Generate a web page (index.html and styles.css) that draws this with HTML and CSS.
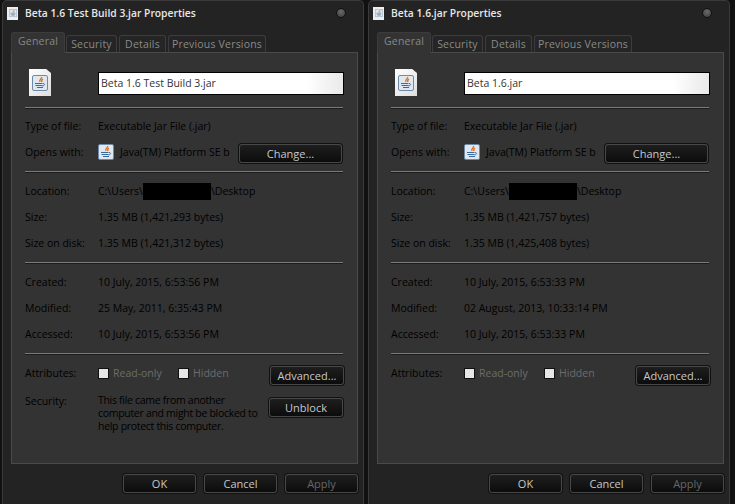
FILE: index.html
```html
<!DOCTYPE html>
<html lang="en">
<head>
<meta charset="utf-8">
<title>Properties</title>
<link rel="stylesheet" href="styles.css">
</head>
<body>
<svg class="defs" width="0" height="0" aria-hidden="true">
  <symbol id="java" viewBox="0 0 16 16">
    <rect x="0.5" y="0.5" width="15" height="15" rx="1.5" fill="#dfe8f1" stroke="#6f8aa6"/>
    <path d="M9.500 2c1 1.800-3 2.500-1.500 5M11 4c-1.300.8-1.800 1.500-1 3" fill="none" stroke="#e2741c" stroke-width="1.400"/>
    <path d="M3 8.500h7.500M3.500 10.500h7M5 12.500h6" stroke="#3a6a9c" stroke-width="1"/>
    <path d="M11 8.500c2.200 0 2 2-.5 2.500" fill="none" stroke="#3a6a9c"/>
  </symbol>
</svg>
<main class="desktop">
  <section class="window">
    <header class="titlebar">
      <span class="title-doc"><svg class="title-icon"><use href="#java"/></svg></span>
      <h1 class="title">Beta 1.6 Test Build 3.jar Properties</h1>
      <span class="close"></span>
    </header>
    <nav class="tabs">
      <span class="tab tab-active">General</span>
      <span class="tab tab-security">Security</span>
      <span class="tab tab-details">Details</span>
      <span class="tab tab-versions">Previous Versions</span>
    </nav>
    <div class="panel">
      <div class="name-row">
        <span class="doc"><svg class="doc-icon"><use href="#java"/></svg></span>
        <div class="name-input">Beta 1.6 Test Build 3.jar</div>
      </div>
      <hr class="sep sep-name">
      <div class="row row-first"><span class="label">Type of file:</span><span class="value">Executable Jar File (.jar)</span></div>
      <div class="row">
        <span class="label">Opens with:</span>
        <span class="value opens"><svg class="app-icon"><use href="#java"/></svg>Java(TM) Platform SE b</span>
        <button class="btn btn-change">Change...</button>
      </div>
      <hr class="sep">
      <div class="row"><span class="label">Location:</span><span class="value value-path">C:\Users\<span class="redact"></span>\Desktop</span></div>
      <div class="row"><span class="label">Size:</span><span class="value">1.35 MB (1,421,293 bytes)</span></div>
      <div class="row"><span class="label">Size on disk:</span><span class="value">1.35 MB (1,421,312 bytes)</span></div>
      <hr class="sep">
      <div class="row"><span class="label">Created:</span><span class="value">10 July, 2015, 6:53:56 PM</span></div>
      <div class="row"><span class="label">Modified:</span><span class="value">25 May, 2011, 6:35:43 PM</span></div>
      <div class="row"><span class="label">Accessed:</span><span class="value">10 July, 2015, 6:53:56 PM</span></div>
      <hr class="sep">
      <div class="row row-attr">
        <span class="label">Attributes:</span>
        <span class="check"><i class="box"></i>Read-only</span>
        <span class="check"><i class="box"></i>Hidden</span>
        <button class="btn btn-side">Advanced...</button>
      </div>
      <div class="row-sec">
        <span class="label">Security:</span>
        <p class="sec-text">This file came from another<br>computer and might be blocked to<br>help protect this computer.</p>
        <button class="btn btn-side">Unblock</button>
      </div>
    </div>
    <footer class="actions">
      <button class="btn btn-action">OK</button>
      <button class="btn btn-action">Cancel</button>
      <button class="btn btn-action btn-disabled">Apply</button>
    </footer>
  </section>

  <section class="window">
    <header class="titlebar">
      <span class="title-doc"><svg class="title-icon"><use href="#java"/></svg></span>
      <h1 class="title">Beta 1.6.jar Properties</h1>
      <span class="close"></span>
    </header>
    <nav class="tabs">
      <span class="tab tab-active">General</span>
      <span class="tab tab-security">Security</span>
      <span class="tab tab-details">Details</span>
      <span class="tab tab-versions">Previous Versions</span>
    </nav>
    <div class="panel">
      <div class="name-row">
        <span class="doc"><svg class="doc-icon"><use href="#java"/></svg></span>
        <div class="name-input">Beta 1.6.jar</div>
      </div>
      <hr class="sep sep-name">
      <div class="row row-first"><span class="label">Type of file:</span><span class="value">Executable Jar File (.jar)</span></div>
      <div class="row">
        <span class="label">Opens with:</span>
        <span class="value opens"><svg class="app-icon"><use href="#java"/></svg>Java(TM) Platform SE b</span>
        <button class="btn btn-change">Change...</button>
      </div>
      <hr class="sep">
      <div class="row"><span class="label">Location:</span><span class="value value-path">C:\Users\<span class="redact"></span>\Desktop</span></div>
      <div class="row"><span class="label">Size:</span><span class="value">1.35 MB (1,421,757 bytes)</span></div>
      <div class="row"><span class="label">Size on disk:</span><span class="value">1.35 MB (1,425,408 bytes)</span></div>
      <hr class="sep">
      <div class="row"><span class="label">Created:</span><span class="value">10 July, 2015, 6:53:33 PM</span></div>
      <div class="row"><span class="label">Modified:</span><span class="value">02 August, 2013, 10:33:14 PM</span></div>
      <div class="row"><span class="label">Accessed:</span><span class="value">10 July, 2015, 6:53:33 PM</span></div>
      <hr class="sep">
      <div class="row row-attr">
        <span class="label">Attributes:</span>
        <span class="check"><i class="box"></i>Read-only</span>
        <span class="check"><i class="box"></i>Hidden</span>
        <button class="btn btn-side">Advanced...</button>
      </div>
    </div>
    <footer class="actions">
      <button class="btn btn-action">OK</button>
      <button class="btn btn-action">Cancel</button>
      <button class="btn btn-action btn-disabled">Apply</button>
    </footer>
  </section>
</main>
</body>
</html>
```
FILE: styles.css
```css
* { box-sizing: border-box; }
html, body { margin: 0; height: 100%; }
body {
  width: 735px;
  height: 504px;
  overflow: hidden;
  background: #111;
  font-family: "Open Sans", "Liberation Sans", sans-serif;
  font-size: 10.5px;
  color: #000;
}
.defs { position: absolute; }
.desktop {
  display: flex;
  gap: 4px;
  padding-left: 2px;
  height: 504px;
}
.window {
  width: 362px;
  height: 504px;
  background: #232323;
  border: 1px solid #3a3a3a;
  border-bottom: 0;
  border-radius: 5px 5px 0 0;
  padding: 0 6px 0 8px;
  display: flex;
  flex-direction: column;
}
.titlebar {
  height: 24px;
  margin-left: -4px;
  display: flex;
  align-items: center;
}
.title-doc {
  width: 11px;
  height: 13px;
  background: #eee;
  display: flex;
  align-items: center;
  justify-content: center;
}
.title-icon { width: 8px; height: 8px; }
.title {
  margin: 0 0 0 7px;
  font-size: 10.3px;
  font-weight: 600;
  color: #e8e8e8;
  flex: 1;
}
.close {
  width: 10px;
  height: 10px;
  margin-right: 11px;
  border-radius: 50%;
  border: 1px solid #111;
  background: radial-gradient(circle at 50% 35%, #6a6a6a, #3a3a3a);
}
.tabs {
  height: 27px;
  display: flex;
  align-items: flex-end;
  gap: 1px;
  position: relative;
  z-index: 1;
}
.tab {
  height: 17px;
  background: #252525;
  border: 1px solid #3c3c3c;
  border-bottom: 0;
  border-radius: 3px 3px 0 0;
  color: #8a8a8a;
  font-size: 10.5px;
  letter-spacing: 0.2px;
  line-height: 16px;
  text-align: center;
}
.tab-active { width: 54px; height: 21px; background: #333; line-height: 17px; color: #888; margin-bottom: -1px; }
.tab-security { width: 51px; }
.tab-details { width: 47px; margin-left: 1px; }
.tab-versions { width: 98px; margin-left: 1px; }
.panel {
  width: 347px;
  height: 412px;
  background: #333;
  border: 1px solid #4a4a4a;
  padding: 0 13px;
}
.name-row {
  height: 54px;
  display: flex;
  align-items: flex-start;
}
.doc {
  width: 22px;
  height: 27px;
  margin: 16px 0 0 4px;
  background: linear-gradient(135deg, #fff, #ddd);
  clip-path: polygon(0 0, 78% 0, 100% 15%, 100% 100%, 0 100%);
  display: flex;
  align-items: center;
  justify-content: center;
}
.doc-icon { width: 16px; height: 16px; }
.name-input {
  width: 246px;
  height: 23px;
  margin: 19px 0 0 47px;
  background: linear-gradient(90deg, #fff 85%, #e9e9e9);
  border: 1px solid #000;
  color: #333;
  padding-left: 2px;
  line-height: 20px;
}
.sep {
  margin: 6px 0 0;
  height: 2px;
  width: 318px;
  border: 0;
  border-top: 1px solid #7a7a7a;
  border-bottom: 1px solid #1c1c1c;
}
.sep-name { margin-top: 0; }
.row {
  height: 26px;
  display: flex;
  align-items: center;
  position: relative;
}
.sep + .row { margin-top: 5px; }
.sep + .row-first { margin-top: 4px; }
.label { width: 73px; flex: none; }
.value { white-space: nowrap; flex: none; }
.value-path { display: flex; align-items: center; }
.opens { display: flex; align-items: center; width: 141px; overflow: hidden; }
.app-icon { width: 16px; height: 16px; margin-right: 6px; flex: none; }
.redact {
  width: 68px;
  height: 17px;
  background: #000;
}
.check {
  display: flex;
  align-items: center;
  color: #6d6d6d;
  width: 80px;
  flex: none;
}
.box {
  width: 11px;
  height: 11px;
  margin-right: 4px;
  background: #e6e6e6;
  border: 1px solid #111;
}
.row-sec {
  display: flex;
  align-items: flex-start;
  height: 48px;
  margin-top: 2px;
}
.row-sec .label { line-height: 26px; }
.sec-text {
  width: 171px;
  margin: 6px 0 0;
  line-height: 13px;
  letter-spacing: -0.3px;
  white-space: nowrap;
  flex: none;
}
.btn {
  font: inherit;
  font-size: 11px;
  height: 19px;
  padding: 0;
  color: #c8c8c8;
  background: linear-gradient(#1e1e1e, #0c0c0c);
  border: 1px solid #484848;
  border-radius: 3px;
  box-shadow: 0 0 0 1px #111;
}
.btn-change { width: 103px; margin-top: 2px; }
.btn-side { width: 74px; flex: none; }
.row-sec .btn-side { margin-top: 10px; }
.row-attr .btn-side { position: absolute; right: 0; top: 6px; }
.actions {
  display: flex;
  justify-content: flex-end;
  gap: 8px;
  margin-top: 10px;
  margin-right: -1px;
}
.btn-action { width: 73px; }
.btn-disabled { color: #666; }
```
